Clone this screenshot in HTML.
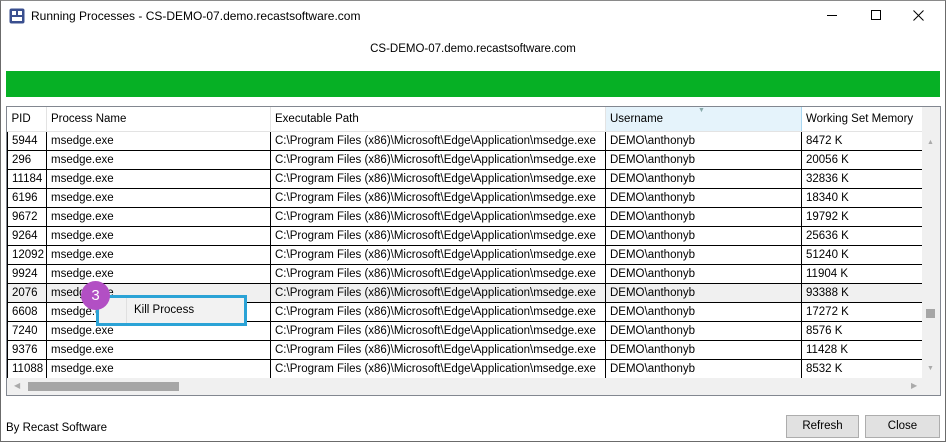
<!DOCTYPE html>
<html><head><style>
*{margin:0;padding:0;box-sizing:border-box}
body{width:946px;height:442px;background:#fff;font-family:"Liberation Sans",sans-serif;font-size:12px;color:#000;position:relative;overflow:hidden}
.win{position:absolute;left:0;top:0;width:946px;height:442px;border:1px solid #6b6b6b;border-top:1px solid #8a8a8a}
.abs{position:absolute}
table{border-collapse:collapse;table-layout:fixed;position:absolute;left:7px;top:107px;width:915px;font-size:11.5px}
td,th{height:19px;padding:0 0 0 4px;white-space:nowrap;overflow:hidden;font-weight:normal;text-align:left;line-height:18px}
td{border:1px solid #000;border-top:none}
th{height:24px;background:#fff;border-right:1px solid #e3e3e3;border-bottom:1px solid #e3e3e3}
.btn{position:absolute;top:415px;height:23px;background:#e1e1e1;border:1px solid #adadad;text-align:center;line-height:21px}
</style></head><body>
<div class="win"></div>
<svg class="abs" style="left:9px;top:8px" width="16" height="16" viewBox="0 0 16 16"><rect x="0.5" y="0.5" width="15" height="15" rx="2" fill="#3a4f8f"/><rect x="3" y="3" width="4" height="4" fill="#fff"/><rect x="9" y="3" width="4" height="4" fill="#fff"/><rect x="3" y="9" width="10" height="4" fill="#fff"/></svg>
<div class="abs" style="left:31px;top:9px;font-size:12px">Running Processes - CS-DEMO-07.demo.recastsoftware.com</div>
<div class="abs" style="left:827px;top:15px;width:10px;height:1px;background:#000"></div>
<div class="abs" style="left:871px;top:10px;width:10px;height:10px;border:1px solid #000"></div>
<svg class="abs" style="left:913px;top:10px" width="11" height="11" viewBox="0 0 11 11"><path d="M0.5 0.5L10.5 10.5M10.5 0.5L0.5 10.5" stroke="#000" stroke-width="1"/></svg>
<div class="abs" style="left:0;top:43px;width:946px;text-align:center;font-size:11.5px">CS-DEMO-07.demo.recastsoftware.com</div>
<div class="abs" style="left:6px;top:71px;width:934px;height:26px;background:#06b025"></div>
<div class="abs" style="left:6px;top:106px;width:935px;height:290px;border:1px solid #828790"></div>
<table>
<colgroup><col style="width:39px"><col style="width:224px"><col style="width:335px"><col style="width:196px"><col style="width:121px"></colgroup>
<tr><th>PID</th><th>Process Name</th><th>Executable Path</th><th style="background:#e5f3fb;border-right:1px solid #a9d7f1;position:relative">Username<span style="position:absolute;left:92px;top:-5px;font-size:7px;color:#8aa">▼</span></th><th>Working Set Memory</th></tr>
<tr><td>5944</td><td>msedge.exe</td><td>C:\Program Files (x86)\Microsoft\Edge\Application\msedge.exe</td><td>DEMO\anthonyb</td><td>8472 K</td></tr>
<tr><td>296</td><td>msedge.exe</td><td>C:\Program Files (x86)\Microsoft\Edge\Application\msedge.exe</td><td>DEMO\anthonyb</td><td>20056 K</td></tr>
<tr><td>11184</td><td>msedge.exe</td><td>C:\Program Files (x86)\Microsoft\Edge\Application\msedge.exe</td><td>DEMO\anthonyb</td><td>32836 K</td></tr>
<tr><td>6196</td><td>msedge.exe</td><td>C:\Program Files (x86)\Microsoft\Edge\Application\msedge.exe</td><td>DEMO\anthonyb</td><td>18340 K</td></tr>
<tr><td>9672</td><td>msedge.exe</td><td>C:\Program Files (x86)\Microsoft\Edge\Application\msedge.exe</td><td>DEMO\anthonyb</td><td>19792 K</td></tr>
<tr><td>9264</td><td>msedge.exe</td><td>C:\Program Files (x86)\Microsoft\Edge\Application\msedge.exe</td><td>DEMO\anthonyb</td><td>25636 K</td></tr>
<tr><td>12092</td><td>msedge.exe</td><td>C:\Program Files (x86)\Microsoft\Edge\Application\msedge.exe</td><td>DEMO\anthonyb</td><td>51240 K</td></tr>
<tr><td>9924</td><td>msedge.exe</td><td>C:\Program Files (x86)\Microsoft\Edge\Application\msedge.exe</td><td>DEMO\anthonyb</td><td>11904 K</td></tr>
<tr style="background:#f0f0f0"><td>2076</td><td>msedge.exe</td><td>C:\Program Files (x86)\Microsoft\Edge\Application\msedge.exe</td><td>DEMO\anthonyb</td><td>93388 K</td></tr>
<tr><td>6608</td><td>msedge.exe</td><td>C:\Program Files (x86)\Microsoft\Edge\Application\msedge.exe</td><td>DEMO\anthonyb</td><td>17272 K</td></tr>
<tr><td>7240</td><td>msedge.exe</td><td>C:\Program Files (x86)\Microsoft\Edge\Application\msedge.exe</td><td>DEMO\anthonyb</td><td>8576 K</td></tr>
<tr><td>9376</td><td>msedge.exe</td><td>C:\Program Files (x86)\Microsoft\Edge\Application\msedge.exe</td><td>DEMO\anthonyb</td><td>11428 K</td></tr>
<tr><td>11088</td><td>msedge.exe</td><td>C:\Program Files (x86)\Microsoft\Edge\Application\msedge.exe</td><td>DEMO\anthonyb</td><td>8532 K</td></tr>
</table>
<div class="abs" style="left:922px;top:107px;width:18px;height:271px;background:#f0f0f0"></div>
<div class="abs" style="left:926px;top:309px;width:9px;height:9px;background:#a6a6a6"></div>
<div class="abs" style="left:927px;top:139px;font-size:7px;color:#aaa">▲</div>
<div class="abs" style="left:927px;top:365px;font-size:7px;color:#aaa">▼</div>
<div class="abs" style="left:7px;top:378px;width:933px;height:17px;background:#f0f0f0"></div>
<div class="abs" style="left:28px;top:382px;width:151px;height:9px;background:#a6a6a6"></div>
<div class="abs" style="left:14px;top:381px;font-size:8px;color:#aaa">◀</div>
<div class="abs" style="left:911px;top:381px;font-size:8px;color:#aaa">▶</div>
<div class="abs" style="left:96px;top:295px;width:151px;height:31px;border:3px solid #2ba3d6;background:#f2f2f2"></div>
<div class="abs" style="left:126px;top:298px;width:1px;height:25px;background:#e0e0e0"></div>
<div class="abs" style="left:134px;top:304px;font-size:11.5px">Kill Process</div>
<div class="abs" style="left:81px;top:281px;width:29px;height:29px;border-radius:50%;background:#b24fc4;color:#fff;font-size:15px;text-align:center;line-height:29px">3</div>
<div class="abs" style="left:6px;top:422px;font-size:11.5px">By Recast Software</div>
<div class="btn" style="left:786px;width:73px;font-size:11.5px">Refresh</div>
<div class="btn" style="left:865px;width:75px;font-size:11.5px">Close</div>
</body></html>
